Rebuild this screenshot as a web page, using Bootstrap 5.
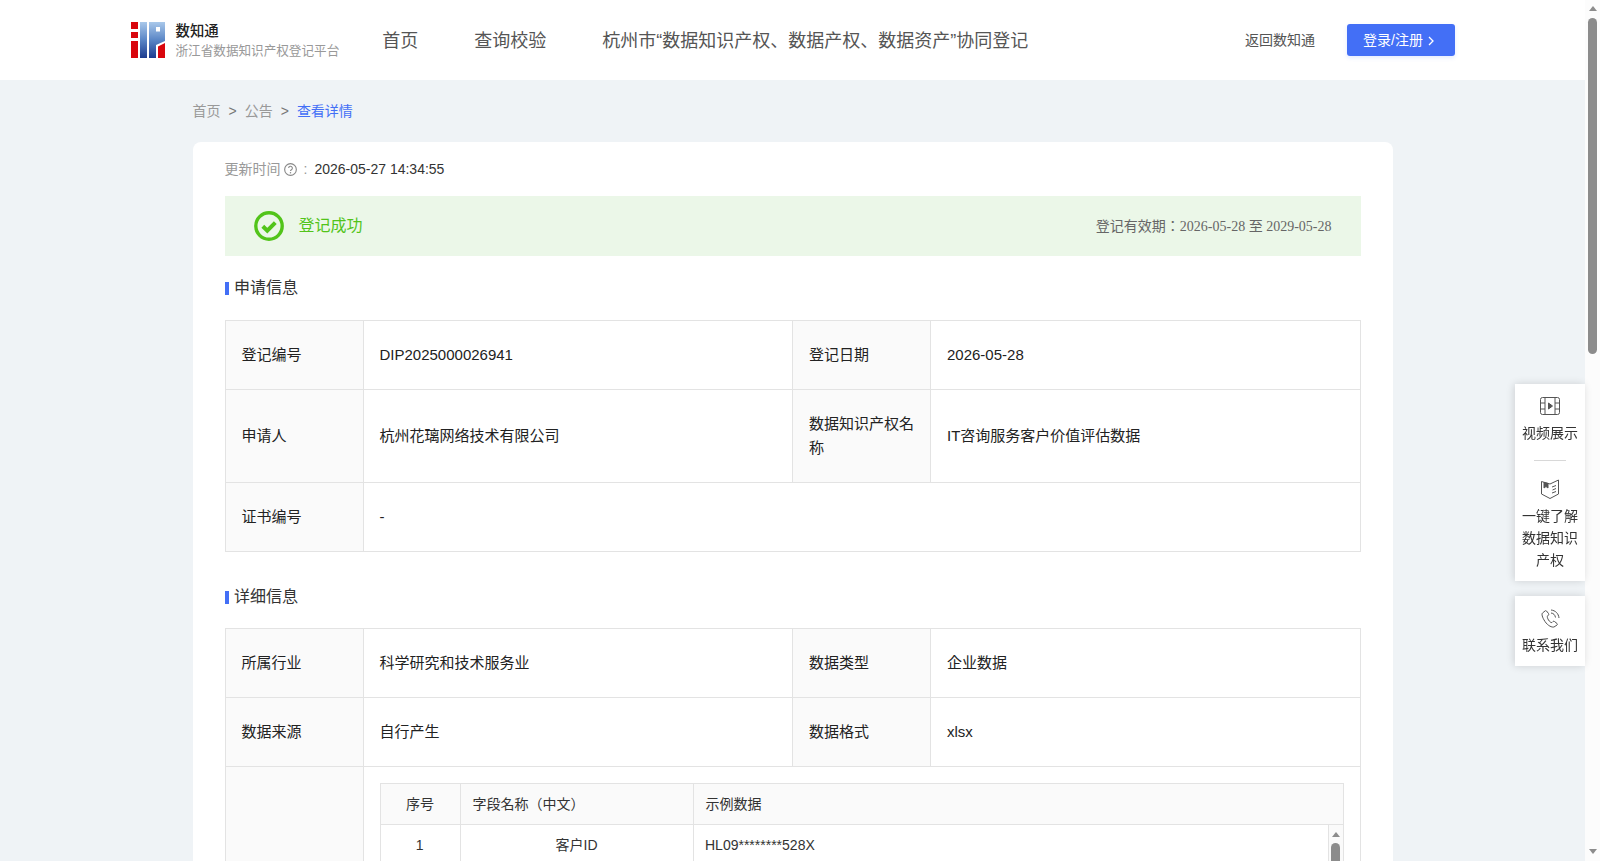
<!DOCTYPE html>
<html>
<head>
    <meta charset="utf-8">
    <title>数知通</title>
    <link href="https://cdn.jsdelivr.net/npm/bootstrap@5.3.0/dist/css/bootstrap.min.css" rel="stylesheet">
    <style>
        html, body { height: 100%; overflow: hidden; }
        body {
            background: #eff3f6;
            font-family: "Liberation Sans", "Noto Sans CJK JP", sans-serif;
            font-size: 14px;
            color: #333;
        }
        .page-wrap { width: 1585px; height: 861px; overflow: hidden; }
        .top-bar { height: 80px; background: #fff; padding: 0 130px 0 131px; }
        .logo-text { margin-left: 10.500px; padding-top: 2px; }
        .logo-title { font-size: 14.4px; font-weight: 500; line-height: 20px; color: #222; }
        .logo-sub { font-size: 12.6px; line-height: 20px; color: #999; }
        .main-nav { margin-left: 43px; gap: 56px; font-size: 18px; padding-top: 2px; }
        .main-nav a { color: #555; text-decoration: none; }
        .back-link { color: #555; margin-right: 32px; text-decoration: none; }
        .login-btn { width: 108px; height: 32px; background: #436ff6; color: #fff; border: 0; border-radius: 3px; font-size: 14px; padding: 0 0 0 16px; text-align: left; box-shadow: 0 2px 4px rgba(67,111,246,.15); }
        .login-btn:hover { background: #436ff6; color: #fff; }
        .crumbs { width: 1200px; margin: 0 auto; height: 62px; padding-top: 21px; line-height: 20px; color: #999; }
        .crumbs i { font-style: normal; margin: 0 8px; color: #777; }
        .crumbs b { font-weight: 400; color: #436ff6; }
        .sheet { width: 1200px; margin: 0 auto; min-height: 800px; background: #fff; border-radius: 8px; padding: 0 32px; }
        .update-row { height: 54px; padding-top: 17px; line-height: 20px; color: #999; }
        .update-row svg { margin-left: 3px; vertical-align: -2px; }
        .update-colon { margin: 0 7px 0 7px; }
        .update-val { color: #333; }
        .ok-banner { height: 60px; background: #ebf7e8; padding: 0 29px 0 29px; }
        .ok-text { font-size: 16px; color: #52c41a; margin-left: 15px; }
        .ok-date { color: #666; font-family: "Liberation Serif", "Noto Sans CJK JP", serif; }
        .sec-title { font-size: 16px; font-weight: 400; line-height: 24px; color: #333; padding-left: 9.500px; position: relative; margin: 20px 0; }
        .sec-next { margin: 33px 0 19px; }
        .sec-title::before { content: ""; position: absolute; left: 0; top: 6px; width: 4px; height: 13px; background: #436ff6; }
        .info-table { width: 1136px; table-layout: fixed; border-collapse: collapse; margin: 0; }
        .info-table th, .info-table td { border: 1px solid #e3e3e3; padding: 0 16px; font-weight: 400; font-size: 15px; line-height: 24px; color: #222; vertical-align: middle; }
        .info-table th { background: #fafafa; }
        .info-table > tbody > tr > th:nth-child(3), .info-table > tbody > tr > td:nth-child(4) { padding: 0 15px 0 16.500px; }
        .row-base { height: 69px; }
        .row-tall { height: 93px; }
        .info-table td.sample-box { padding: 16px 16px 17px; }
        .sample-table { width: 100%; table-layout: fixed; border-collapse: collapse; }
        .info-table .sample-table th, .info-table .sample-table td { border: 1px solid #e3e3e3; font-size: 14px; height: 41px; padding: 0 12px; line-height: 20px; color: #333; }
        .sample-body { border: 1px solid #e3e3e3; border-top: 0; height: 80px; overflow: hidden; }
        .sample-body .sample-table { border-style: hidden; flex: 1; align-self: flex-start; }
        .info-table .sample-body .sample-table td { height: 40px; padding: 0 12px 0 11px; }
        .mini-rail { width: 15px; border-left: 1px solid #e3e3e3; background: #fafafa; padding-top: 7px; flex: none; }
        .rail-up { width: 0; height: 0; border: solid transparent; border-width: 0 4.500px 5px; border-bottom-color: #8c8c8c; }
        .rail-down { width: 0; height: 0; border: solid transparent; border-width: 5px 4.500px 0; border-top-color: #8c8c8c; }
        .rail-thumb { width: 9px; background: #8c8c8c; border-radius: 5px; }
        .mini-rail .rail-thumb { height: 60px; margin-top: 6px; }
        .page-rail { position: fixed; top: 0; right: 0; width: 15px; height: 861px; background: #fcfcfc; padding: 6px 0 7px; }
        .page-rail .rail-thumb { height: 336px; margin-top: 7px; }
        .side-box { position: fixed; right: 15px; width: 70px; background: #fff; box-shadow: -1px 0 8px rgba(0,0,0,.14); text-align: center; font-size: 14px; line-height: 22px; color: #333; }
        .side-box svg { display: block; margin: 0 auto; }
        .side-box hr { width: 32px; margin: 16px auto 18px; border-color: #d8d8d8; opacity: 1; }
        .box-a { top: 384px; height: 197px; padding: 13px 7px 0; }
        .box-b { top: 596px; height: 70px; padding: 13px 7px 0; }
        .gap-video { margin-bottom: 7px !important; }
        .gap-book { margin-bottom: 6px !important; }
        .gap-phone { margin-bottom: 5px !important; }
    </style>
</head>
<body>
<div class="page-wrap">
    <header class="top-bar d-flex align-items-center">
        <svg width="34" height="36" viewBox="0 0 34 36">
            <defs>
                <linearGradient id="blueFade" x1="0" y1="0" x2="0" y2="1">
                    <stop offset="0" stop-color="#a9c8ea"/>
                    <stop offset=".5" stop-color="#5a86c6"/>
                    <stop offset="1" stop-color="#1d3c8f"/>
                </linearGradient>
            </defs>
            <rect x="0" y="0" width="7" height="36" fill="#d9060d"/>
            <rect x="0" y="7" width="7" height="3" fill="#fff"/>
            <rect x="0" y="16" width="7" height="3" fill="#fff"/>
            <rect x="9" y="0" width="7" height="36" fill="url(#blueFade)"/>
            <path d="M18 0H34V19L25 23V36H18Z" fill="url(#blueFade)"/>
            <rect x="25" y="5" width="4" height="4.500" fill="#fff"/>
            <path d="M27 24.500L34 21V36H27Z" fill="#d9060d"/>
        </svg>
        <div class="logo-text">
            <div class="logo-title">数知通</div>
            <div class="logo-sub">浙江省数据知识产权登记平台</div>
        </div>
        <nav class="main-nav d-flex">
            <a href="#">首页</a>
            <a href="#">查询校验</a>
            <a href="#">杭州市“数据知识产权、数据产权、数据资产”协同登记</a>
        </nav>
        <a class="back-link ms-auto" href="#">返回数知通</a>
        <button class="btn login-btn">登录/注册
            <svg width="8" height="10" viewBox="0 0 8 10"><path d="M2 1l4 4-4 4" fill="none" stroke="#fff" stroke-width="1.300"/></svg>
        </button>
    </header>

    <div class="crumbs">首页<i>&gt;</i>公告<i>&gt;</i><b>查看详情</b></div>

    <main class="sheet">
        <div class="update-row">更新时间<svg width="13" height="13" viewBox="0 0 14 14"><circle cx="7" cy="7" r="6.300" fill="none" stroke="#888" stroke-width="1.200"/><path d="M5 5.500a2 2 0 1 1 3 1.700c-.7.400-1 .7-1 1.500" fill="none" stroke="#888" stroke-width="1.200"/><circle cx="7" cy="10.500" r=".8" fill="#888"/></svg><span class="update-colon">:</span><span class="update-val">2026-05-27 14:34:55</span></div>
        <div class="ok-banner d-flex align-items-center">
            <svg width="30" height="30" viewBox="0 0 30 30"><circle cx="15" cy="15" r="13.200" fill="none" stroke="#52c41a" stroke-width="3.400"/><path d="M8.800 15.200l4.500 4.400 8-8" fill="none" stroke="#52c41a" stroke-width="4"/></svg>
            <span class="ok-text">登记成功</span>
            <span class="ok-date ms-auto">登记有效期：2026-05-28 至 2029-05-28</span>
        </div>

        <h2 class="sec-title">申请信息</h2>
        <table class="info-table">
            <colgroup><col style="width:138px"><col style="width:429px"><col style="width:138px"><col></colgroup>
            <tr class="row-base"><th>登记编号</th><td>DIP2025000026941</td><th>登记日期</th><td>2026-05-28</td></tr>
            <tr class="row-tall"><th>申请人</th><td>杭州花璃网络技术有限公司</td><th>数据知识产权名称</th><td>IT咨询服务客户价值评估数据</td></tr>
            <tr class="row-base"><th>证书编号</th><td colspan="3">-</td></tr>
        </table>

        <h2 class="sec-title sec-next">详细信息</h2>
        <table class="info-table">
            <colgroup><col style="width:138px"><col style="width:429px"><col style="width:138px"><col></colgroup>
            <tr class="row-base"><th>所属行业</th><td>科学研究和技术服务业</td><th>数据类型</th><td>企业数据</td></tr>
            <tr class="row-base"><th>数据来源</th><td>自行产生</td><th>数据格式</th><td>xlsx</td></tr>
            <tr>
                <th></th>
                <td colspan="3" class="sample-box">
                    <table class="sample-table">
                        <colgroup><col style="width:80px"><col style="width:233px"><col></colgroup>
                        <tr><th class="text-center">序号</th><th>字段名称（中文）</th><th>示例数据</th></tr>
                    </table>
                    <div class="sample-body d-flex">
                        <table class="sample-table">
                            <colgroup><col style="width:80px"><col style="width:233px"><col></colgroup>
                            <tr><td class="text-center">1</td><td class="text-center">客户ID</td><td>HL09********528X</td></tr>
                        </table>
                        <div class="mini-rail d-flex flex-column align-items-center">
                            <div class="rail-up"></div>
                            <div class="rail-thumb"></div>
                        </div>
                    </div>
                </td>
            </tr>
        </table>
    </main>
</div>

    <div class="page-rail d-flex flex-column align-items-center">
        <div class="rail-up"></div>
        <div class="rail-thumb"></div>
        <div class="rail-down mt-auto"></div>
    </div>

    <aside class="side-box box-a">
        <svg class="gap-video" width="20" height="18" viewBox="0 0 20 18" fill="none" stroke="#555"><rect x=".5" y=".5" width="19" height="17" rx="2"/><path d="M5 .5v17M15 .5v17M.5 6h4.500M.5 12h4.500M15 6h4.500M15 12h4.500"/><path d="M8.500 6l4 3-4 3z" fill="#555"/></svg>
        视频展示
        <hr>
        <svg class="gap-book" width="20" height="20" viewBox="0 0 20 20" fill="none" stroke="#555"><path d="M1.500 2.500l8.500 2.500 8.500-4v14l-8.500 4.500-8.500-4.500z"/><path d="M4 3v6l2-1.500 2 1.500V4" fill="#555"/><path d="M12 8l4-1.500M12.500 11l3.500-1.500M12 14l4-1.500"/></svg>
        一键了解数据知识产权
    </aside>
    <aside class="side-box box-b">
        <svg class="gap-phone" width="20" height="20" viewBox="0 0 20 20" fill="none" stroke="#555"><path d="M5 2L2.500 4c-1 1-.5 4 2.500 8.500S12 18.500 14 18l3-2c.6-.5.5-1 0-1.500l-2.500-2c-.5-.4-1-.4-1.500 0l-1 1c-1 .5-2.500-1-3.500-2.500S7 7.500 7.500 7l1-1c.4-.5.4-1 0-1.500L6.500 2C6 1.500 5.500 1.500 5 2z"/><path d="M11 4c2.500.3 4 1.800 4.500 4.500M11 1c4.500.5 7.500 3.500 8 8"/></svg>
        联系我们
    </aside>
</body>
</html>
